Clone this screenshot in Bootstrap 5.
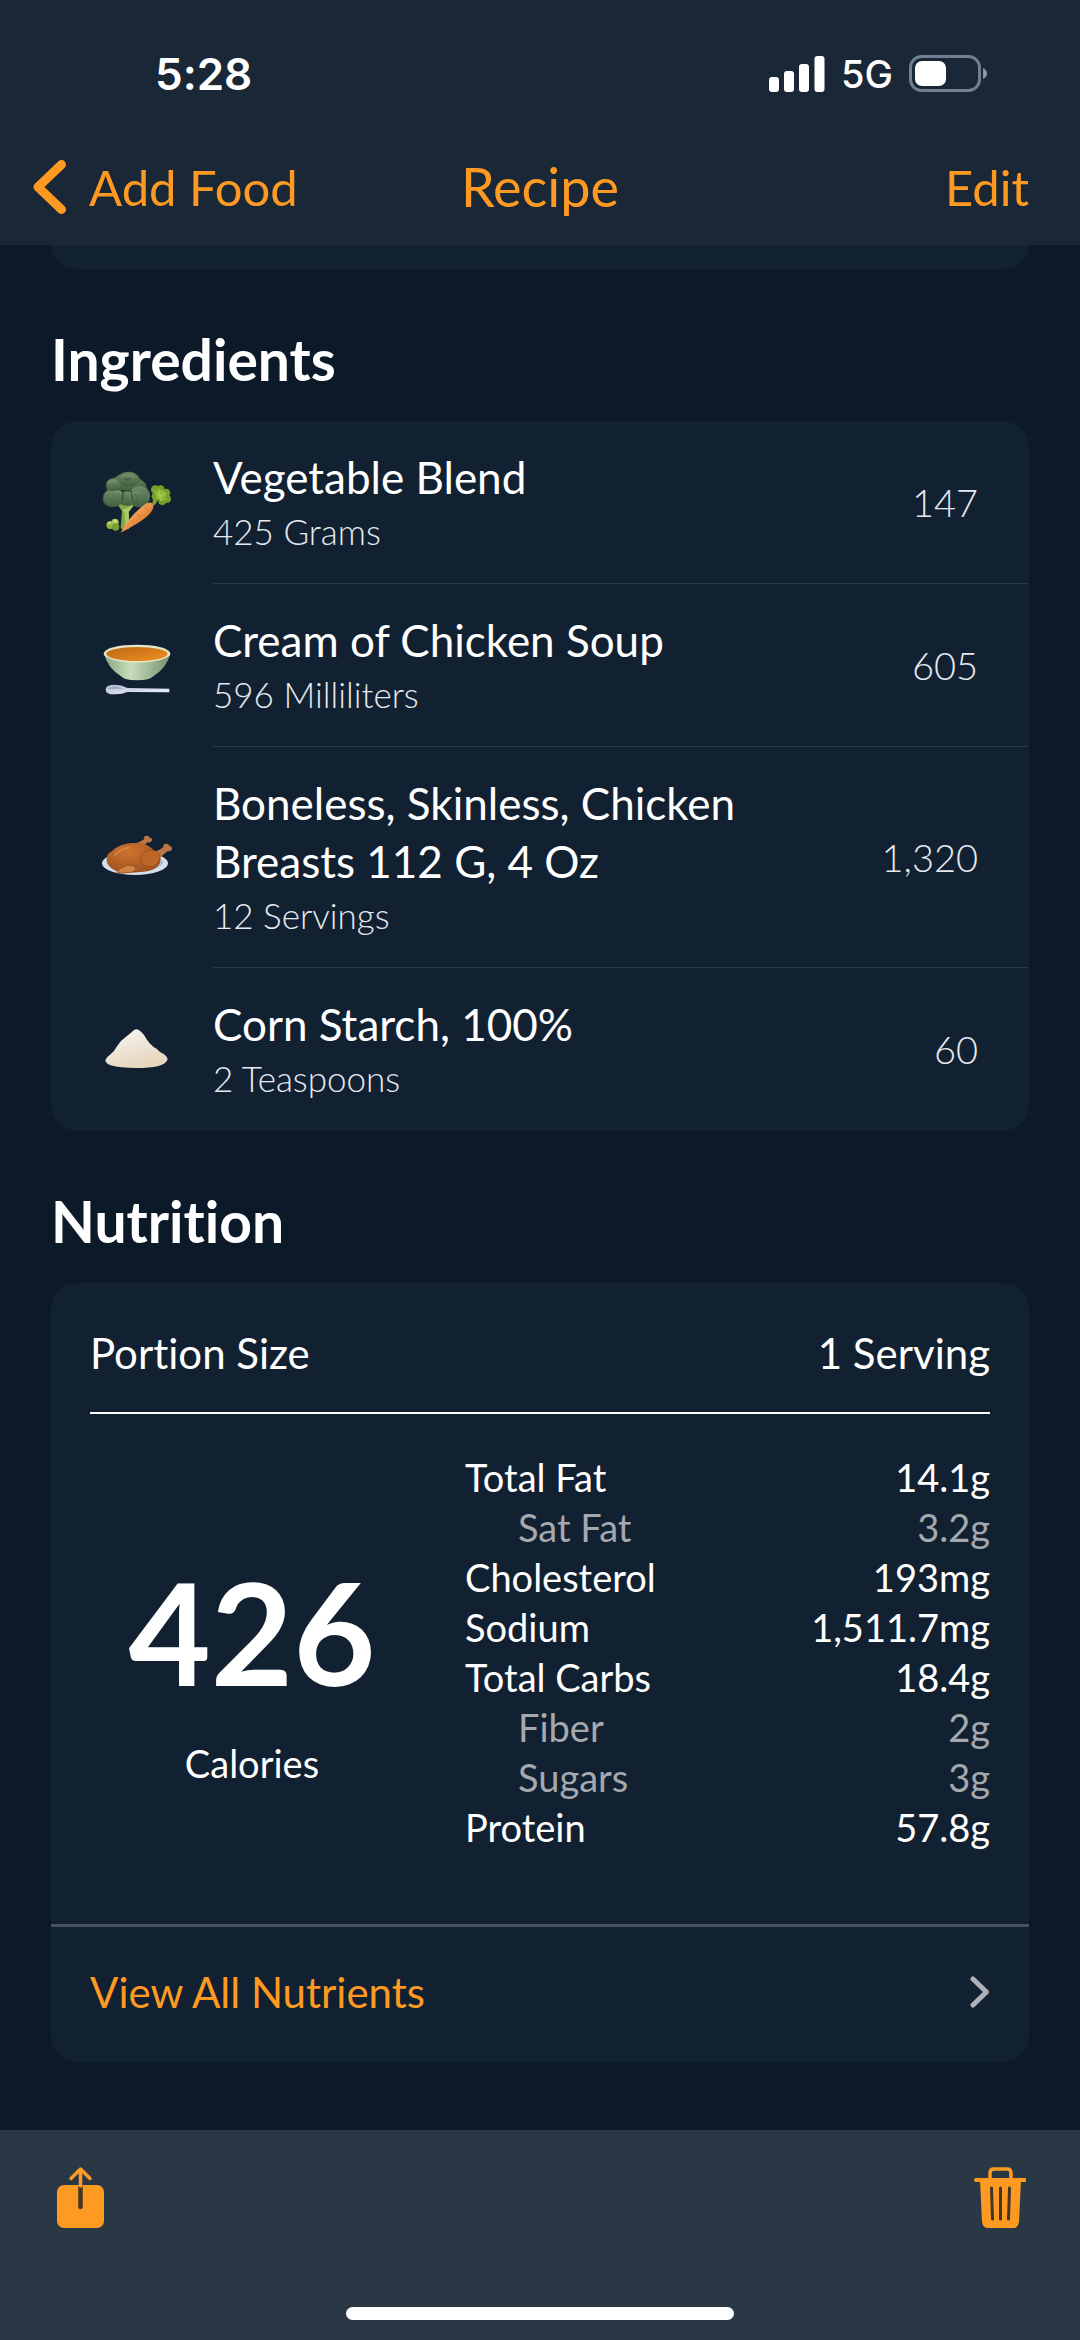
<!DOCTYPE html>
<html lang="en">
<head>
<meta charset="utf-8">
<meta name="viewport" content="width=device-width, initial-scale=1">
<title>Recipe</title>
<link rel="stylesheet" href="https://cdn.jsdelivr.net/npm/bootstrap@5.3.0/dist/css/bootstrap.min.css">
<style>
  :root { --accent: #fe9a22; --page: #0c1928; --panel: #122131; --bar: #192737; --toolbar: #2a3745; --muted-text: #a4a8af; }
  body { background: var(--page); color: #fff; font-family: Lato, "Liberation Sans", sans-serif; font-size: 42px; line-height: 58px; font-variant-ligatures: none; }
  svg { display: block; flex: none; }
  .top-bar { background: var(--bar); height: 245px; }
  .status-line { height: 147px; padding: 0 92px 0 155px; font-family: Inter, "Liberation Sans", sans-serif; }
  .clock { font-size: 44px; font-weight: 600; }
  .network { font-size: 38px; font-weight: 500; }
  .nav-line { height: 80px; padding: 0 33px; font-size: 49px; }
  .nav-line h1 { font-size: 54px; font-weight: 400; color: var(--accent); }
  .nav-end { padding-right: 18px; }
  .back-link { gap: 22px; }
  .accent-link, .accent-link:hover { color: var(--accent); text-decoration: none; }
  .content { padding: 0 51px; }
  .panel { background: var(--panel); border-radius: 26px; }
  .panel-tail { height: 24px; border-radius: 0 0 26px 26px; }
  .section-title { font-size: 57px; font-weight: 700; line-height: 66px; margin: 57px 0 29px; }
  .food { padding-left: 50px; gap: 40px; }
  .food-body { padding: 27px 51px 27px 0; border-bottom: 1px solid #2b3947; }
  .food:last-child .food-body { border-bottom: 0; padding-bottom: 28px; }
  .food-name { max-width: 580px; font-size: 44px; }
  .food-amount { font-size: 35px; font-weight: 300; line-height: 50px; color: #e6eaf0; }
  .food-kcal { font-size: 38px; font-weight: 300; color: #e6eaf0; }
  .inset { padding: 0 39px; }
  .portion { padding: 41px 0 30px; border-bottom: 2px solid #fff; }
  .facts { padding: 38px 0 72px; }
  .energy { padding: 44px 51px 0 0; gap: 36px; }
  .energy-value { font-size: 142px; font-weight: 700; line-height: 142px; }
  .fact-text { font-size: 38px; line-height: 50px; }
  .fact-table th, .fact-table td { padding: 0; }
  .fact-table th { font-weight: 400; }
  .fact-table .sub-fact { color: var(--muted-text); }
  .fact-table .sub-fact th { padding-left: 53px; }
  .more { border-top: 3px solid #46525c; padding-top: 36px; padding-bottom: 41px; }
  .toolbar { background: var(--toolbar); height: 210px; }
  .tool-row { padding: 32px 50px 0; }
  .tool-row .btn { --bs-btn-border-width: 0; line-height: 1; }
  .home-bar { width: 388px; height: 13px; border-radius: 7px; background: #fff; margin-bottom: 20px; }
</style>
</head>
<body class="d-flex flex-column min-vh-100">

<header class="top-bar">
  <div class="status-line d-flex justify-content-between align-items-center">
    <span class="clock">5:28</span>
    <div class="d-flex align-items-center">
      <svg width="56" height="36" viewBox="0 0 56 36" fill="#fff" aria-hidden="true">
        <rect x="0" y="21" width="10" height="15" rx="3"/><rect x="15" y="15" width="10" height="21" rx="3"/><rect x="30" y="8" width="10" height="28" rx="3"/><rect x="45.500" y="0" width="10" height="36" rx="3"/>
      </svg>
      <span class="network mx-3">5G</span>
      <svg width="79" height="38" viewBox="0 0 79 38" aria-hidden="true">
        <rect x="1.500" y="1.500" width="69" height="34" rx="11" fill="none" stroke="#70808e" stroke-width="3"/>
        <rect x="6" y="6" width="31" height="25" rx="7" fill="#fff"/>
        <path d="M74 13q4 2 4 5.500t-4 5.500z" fill="#8b97a3"/>
      </svg>
    </div>
  </div>
  <nav class="nav-line d-flex align-items-center">
    <div class="flex-fill w-25 d-flex"><a href="#" class="back-link accent-link d-flex align-items-center">
      <svg width="34" height="56" viewBox="0 0 34 56" fill="none" stroke="currentColor" stroke-width="9" stroke-linecap="round" stroke-linejoin="round" aria-hidden="true"><path d="M28.500 5.500 5 28l23.500 22.500"/></svg>Add Food</a></div>
    <h1 class="m-0">Recipe</h1>
    <div class="nav-end flex-fill w-25 text-end"><a href="#" class="accent-link">Edit</a></div>
  </nav>
</header>

<main class="content">
  <div class="panel panel-tail"></div>

  <h2 class="section-title">Ingredients</h2>
  <div class="panel">
    <div class="food d-flex align-items-center">
      <svg width="72" height="72" viewBox="63 78 216 216" role="img" aria-label="Broccoli and carrot">
        <defs><linearGradient id="crown" x1="0" y1="0" x2="0" y2="1"><stop offset="0" stop-color="#6f8d6a"/><stop offset="1" stop-color="#435f40"/></linearGradient>
        <linearGradient id="carrot" x1="0" y1="0" x2="1" y2="1"><stop offset="0.300" stop-color="#f9ae6b"/><stop offset="0.700" stop-color="#dd7527"/></linearGradient></defs>
        <path d="M112 190l14 20-4 52q12 8 26 0l-2-48 18-24z" fill="#82ab47"/>
        <path d="M126 208l8 8 2 46q8 2 12-2l-2-48 14-20z" fill="#a8c967"/>
        <g fill="url(#crown)" stroke="#3d5d36" stroke-width="1.500">
          <path d="M80 146q-4-22 16-32 12-4 20-12 30-18 52 0 8 4 14 14 22 10 18 34z"/>
          <ellipse cx="178" cy="166" rx="32" ry="32"/><ellipse cx="142" cy="172" rx="28" ry="22"/>
          <path d="M69 174q0-26 26-29 34-4 36 20 0 16-10 24-10 10-24 8-26 0-28-23z"/>
          <ellipse cx="101" cy="131" rx="23" ry="19"/><ellipse cx="146" cy="114" rx="31" ry="21"/>
        </g>
        <path d="M100 154q14-8 26 6M148 160q16-12 34-2M124 108q16-10 40 2M86 126q10-10 24-2" fill="none" stroke="#7f9f77" stroke-width="5" opacity="0.600"/>
        <path d="M134 112l10 6 8-8M130 150l-4 28M152 148l8 32" fill="none" stroke="#2e4a2b" stroke-width="3"/>
        <g fill="#91b33f"><circle cx="91" cy="252" r="12"/><circle cx="105" cy="244" r="11" fill="#a9c755"/><circle cx="107" cy="258" r="11" fill="#7c9f34"/></g><circle cx="89" cy="247" r="4" fill="#c9df78"/><circle cx="106" cy="241" r="4" fill="#d0e585"/>
        <path d="M216 190q2-14 8-22l10 8q-6 12-12 18z" fill="#7da33b"/>
        <g fill="#789f28"><circle cx="226" cy="146" r="13"/><circle cx="242" cy="144" r="11"/><circle cx="258" cy="156" r="13"/><circle cx="262" cy="174" r="11"/><circle cx="247" cy="180" r="12"/><circle cx="228" cy="166" r="13"/><circle cx="242" cy="162" r="15" fill="#93b93b"/></g>
        <path d="M220 146l20 22 22-14M236 144l6 34 20-6" stroke="#b6d55b" stroke-width="4" stroke-dasharray="4 4" fill="none"/>
        <path d="M122 275q24-46 66-80 14-12 26-10 10 6 4 20-8 18-34 34-24 16-62 36z" fill="url(#carrot)"/>
        <path d="M194 198l12 12M170 218l10 10M154 240l8 4" stroke="#c6621f" stroke-width="2"/>
      </svg>
      <div class="food-body d-flex flex-fill justify-content-between align-items-center">
        <div><div class="food-name">Vegetable Blend</div><div class="food-amount">425 Grams</div></div>
        <div class="food-kcal">147</div>
      </div>
    </div>
    <div class="food d-flex align-items-center">
      <svg width="72" height="72" viewBox="63 27 216 216" role="img" aria-label="Soup bowl">
        <defs><linearGradient id="bowl"><stop offset="0" stop-color="#87a583"/><stop offset="0.400" stop-color="#c7ddbb"/><stop offset="1" stop-color="#75916e"/></linearGradient>
        <linearGradient id="broth" x1="0" y1="0" x2="1" y2="1"><stop offset="0" stop-color="#b96913"/><stop offset="1" stop-color="#f28f20"/></linearGradient>
        <linearGradient id="spoon" x1="0" y1="0" x2="1" y2="1"><stop offset="0" stop-color="#b4bdd4"/><stop offset="1" stop-color="#f2f5fd"/></linearGradient></defs>
        <path d="M72 98q10 42 54 70 10 10 45 10t46-10q44-28 54-70z" fill="url(#bowl)"/>
        <ellipse cx="171" cy="98" rx="100" ry="27" fill="#e4e6c9"/><ellipse cx="171" cy="99" rx="92" ry="21" fill="url(#broth)"/>
        <path d="M77 206q0-15 27-15 20 0 38 10l126 2v11l-126-1q-18 8-38 7-27 0-27-14z" fill="url(#spoon)"/>
        <path d="M84 205q6-10 28-8 12 2 18 8-22-4-46 0z" fill="#9ba7c4"/>
      </svg>
      <div class="food-body d-flex flex-fill justify-content-between align-items-center">
        <div><div class="food-name">Cream of Chicken Soup</div><div class="food-amount">596 Milliliters</div></div>
        <div class="food-kcal">605</div>
      </div>
    </div>
    <div class="food d-flex align-items-center">
      <svg width="72" height="72" viewBox="63 36 216 216" role="img" aria-label="Roast chicken">
        <defs><radialGradient id="roast" cx="0.400" cy="0.300" r="0.800"><stop offset="0" stop-color="#cf732f"/><stop offset="1" stop-color="#97501f"/></radialGradient></defs>
        <ellipse cx="165" cy="160" rx="99" ry="35" fill="#d5deeb"/><ellipse cx="165" cy="157" rx="84" ry="26" fill="#aebccd"/>
        <path d="M160 102q20-4 32-14-2-10 8-11 8 0 9 6 8 0 7 8-2 8-12 6-12 8-22 14z" fill="#bb7546"/>
        <path d="M226 124q14-4 24-12-2-10 8-11 9-1 10 7 9 1 8 9-2 8-14 7-14 12-26 22z" fill="#bb7546"/>
        <path d="M80 144q2-14 12-18 26-28 80-28 32 2 50 24 26 12 18 36-12 26-60 28-60 6-84-10-18-12-16-32z" fill="url(#roast)"/>
        <path d="M182 148q2-24 30-28 24 0 28 20 0 20-22 30-28 4-36-22z" fill="#bd6628" stroke="#8a4a1e" stroke-width="2"/>
        <path d="M110 186q10-14 32-20 20-2 26 10-6 12-28 12-16 4-30-2z" fill="#d28243" stroke="#874217" stroke-width="2"/>
        <path d="M104 136q14-18 44-24" fill="none" stroke="#eb9a57" stroke-width="5" opacity="0.500" stroke-linecap="round"/>
      </svg>
      <div class="food-body d-flex flex-fill justify-content-between align-items-center">
        <div><div class="food-name">Boneless, Skinless, Chicken Breasts 112 G, 4 Oz</div><div class="food-amount">12 Servings</div></div>
        <div class="food-kcal">1,320</div>
      </div>
    </div>
    <div class="food d-flex align-items-center">
      <svg width="72" height="72" viewBox="63 612 216 216" role="img" aria-label="Powder">
        <defs><linearGradient id="powder" x1="0" y1="0" x2="0.500" y2="1"><stop offset="0.200" stop-color="#f4f0ec"/><stop offset="1" stop-color="#e6d7bc"/></linearGradient></defs>
        <path d="M76 750q2-8 14-16 12-8 20-24 10-18 28-30 14-10 24-20 8-6 18 2 12 10 20 26 8 14 20 22 12 6 20 16 20 8 23 22-4 14-28 20-26 6-65 6-50 0-78-8-16-6-16-16z" fill="url(#powder)"/>
        <path d="M94 752l18 4 20-8 18 10 30-8 24 8 30-8M120 730l24 6 20-8 30 8 22-6M146 704l20 4 16-6" stroke="#d9cbb0" stroke-width="2" stroke-dasharray="3 5" fill="none"/>
      </svg>
      <div class="food-body d-flex flex-fill justify-content-between align-items-center">
        <div><div class="food-name">Corn Starch, 100%</div><div class="food-amount">2 Teaspoons</div></div>
        <div class="food-kcal">60</div>
      </div>
    </div>
  </div>

  <h2 class="section-title">Nutrition</h2>
  <div class="panel">
    <div class="inset">
      <div class="portion d-flex justify-content-between"><span>Portion Size</span><span>1 Serving</span></div>
      <div class="facts row g-0">
        <div class="energy col-5 d-flex flex-column align-items-center justify-content-center">
          <div class="energy-value">426</div>
          <div class="fact-text">Calories</div>
        </div>
        <div class="col-7">
          <table class="fact-table fact-text w-100">
            <tbody>
              <tr><th scope="row">Total Fat</th><td class="text-end">14.1g</td></tr>
              <tr class="sub-fact"><th scope="row">Sat Fat</th><td class="text-end">3.2g</td></tr>
              <tr><th scope="row">Cholesterol</th><td class="text-end">193mg</td></tr>
              <tr><th scope="row">Sodium</th><td class="text-end">1,511.7mg</td></tr>
              <tr><th scope="row">Total Carbs</th><td class="text-end">18.4g</td></tr>
              <tr class="sub-fact"><th scope="row">Fiber</th><td class="text-end">2g</td></tr>
              <tr class="sub-fact"><th scope="row">Sugars</th><td class="text-end">3g</td></tr>
              <tr><th scope="row">Protein</th><td class="text-end">57.8g</td></tr>
            </tbody>
          </table>
        </div>
      </div>
    </div>
    <a href="#" class="more inset accent-link d-flex justify-content-between align-items-center">
      <span>View All Nutrients</span>
      <svg width="20" height="34" viewBox="0 0 20 34" fill="none" stroke="#aeb1b7" stroke-width="5" stroke-linecap="round" stroke-linejoin="round" aria-hidden="true"><path d="M3 4l13.500 13L3 30"/></svg>
    </a>
  </div>
</main>

<footer class="toolbar mt-auto d-flex flex-column justify-content-between">
  <div class="tool-row d-flex justify-content-between">
    <button type="button" class="btn p-1" aria-label="Share">
      <svg width="52" height="64" viewBox="0 0 52 64" aria-hidden="true">
        <rect x="3" y="19" width="47" height="43" rx="7" fill="#fe9a22"/>
        <path d="M26.500 21v20" stroke="#453526" stroke-width="4.500" stroke-linecap="round"/>
        <path d="M26.500 20V3M17 12.500 26.500 3l9.500 9.500" fill="none" stroke="#fe9a22" stroke-width="3.500" stroke-linecap="round" stroke-linejoin="round"/>
      </svg>
    </button>
    <button type="button" class="btn p-1" aria-label="Delete">
      <svg width="52" height="64" viewBox="0 0 52 64" aria-hidden="true">
        <path d="M16 13V7q0-4 4-4h13q4 0 4 4v6" fill="none" stroke="#fe9a22" stroke-width="3.500"/>
        <path d="M2 14h49" stroke="#fe9a22" stroke-width="4" stroke-linecap="round"/>
        <path d="M6 14h41l-2 42q-1 6-6 6H14q-5 0-6-6z" fill="#fe9a22"/>
        <path d="M17.500 22l1 31M26.500 22v31M35.500 22l-1 31" stroke="#453526" stroke-width="3" stroke-linecap="round"/>
      </svg>
    </button>
  </div>
  <div class="home-bar align-self-center"></div>
</footer>

<script src="https://cdn.jsdelivr.net/npm/bootstrap@5.3.0/dist/js/bootstrap.bundle.min.js"></script>
</body>
</html>
